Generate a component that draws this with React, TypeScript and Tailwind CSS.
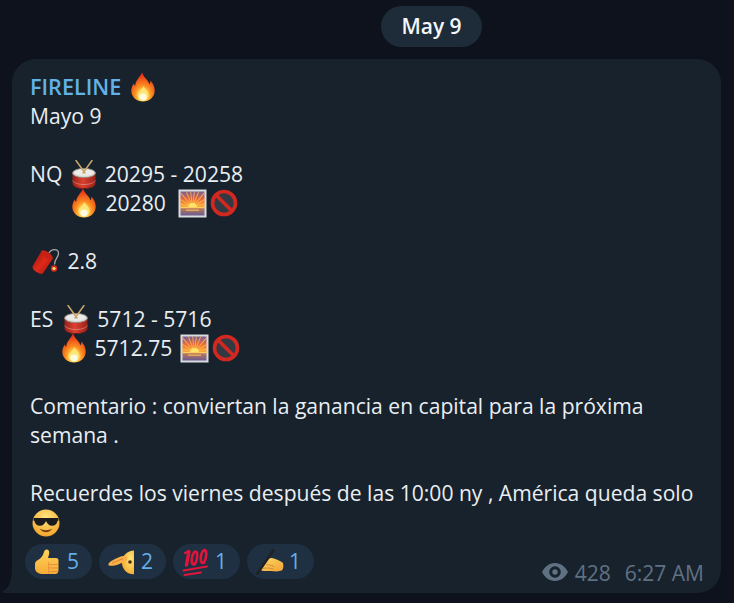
import React from "react";

const base = "inline-block -mt-[8px] -mb-[4px] ";

function Fire({ id, className = "" }: { id: string; className?: string }) {
  return (
    <svg viewBox="0 0 24 30" width="24" height="30" className={base + className}>
      <defs>
        <radialGradient id={id} cx="50%" cy="80%" r="75%">
          <stop offset="0%" stopColor="#fffbe0" />
          <stop offset="20%" stopColor="#ffe15a" />
          <stop offset="48%" stopColor="#fb8c1f" />
          <stop offset="100%" stopColor="#e42a18" />
        </radialGradient>
      </defs>
      <path
        d="M11 .5c1.500 3.500 2.800 5 5 7.500 1.200 1.400 2 2.800 2.300 4.300 1-.7 1.200-2.300 1-3.800 2.700 2.700 4.400 6 4.400 10C23.700 25 18.500 29.500 12 29.500S.3 25 .3 18.800c0-3 1.200-5.500 2.600-7.300.2 1 .6 2 1.400 2.500C4 9 8.500 6 11 .5z"
        fill={`url(#${id})`}
      />
      <path d="M12.500 14c.6 2.500 5 4.500 5 9 0 3.300-2.500 5.500-5.500 5.500S6.500 26.300 6.500 23c0-3.500 4.500-5 6-9z" fill="#ffe67a" opacity=".9" />
      <ellipse cx="12" cy="25" rx="3.600" ry="3.400" fill="#fffbe0" />
    </svg>
  );
}

function Drum({ id, className = "" }: { id: string; className?: string }) {
  return (
    <svg viewBox="0 0 24 29" width="24" height="29" className={base + className}>
      <defs>
        <linearGradient id={id} x1="0" y1="0" x2="1" y2="0">
          <stop offset="0%" stopColor="#98201a" />
          <stop offset="45%" stopColor="#dc4030" />
          <stop offset="100%" stopColor="#98201a" />
        </linearGradient>
      </defs>
      <path d="M.5 13v10.500c0 3 5 5.500 11.500 5.500s11.500-2.500 11.500-5.500V13z" fill={`url(#${id})`} />
      <path d="M.5 23c0 3 5 5 11.500 5s11.500-2 11.500-5v.8c0 3-5 5.200-11.500 5.200S.5 26.800.5 23.800z" fill="#5e1a14" />
      <path d="M.6 20.500c1.500 2.500 6 4 11.400 4s10-1.500 11.400-4" fill="none" stroke="#e8b9a4" strokeWidth=".5" />
      <ellipse cx="12" cy="13" rx="11.500" ry="4.600" fill="#d9d9d6" stroke="#8e8778" strokeWidth=".8" />
      <ellipse cx="12" cy="12.500" rx="9.500" ry="3.300" fill="#ececea" />
      <path d="M4 .5l9 12.500M20 .5l-9 12.500" stroke="#c9a566" strokeWidth="1.500" strokeLinecap="round" />
    </svg>
  );
}

function Sunrise({ id, className = "" }: { id: string; className?: string }) {
  const rays = [-75, -58, -40, -22, -7, 7, 22, 40, 58, 75];
  return (
    <svg viewBox="0 0 29 29" width="29" height="29" className={base + className}>
      <defs>
        <linearGradient id={id} x1="0" y1="0" x2="0" y2="1">
          <stop offset="0%" stopColor="#75609f" />
          <stop offset="32%" stopColor="#e8683c" />
          <stop offset="62%" stopColor="#fcaa3a" />
          <stop offset="66%" stopColor="#c87e55" />
          <stop offset="100%" stopColor="#6a5a90" />
        </linearGradient>
      </defs>
      <rect x=".5" y=".5" width="28" height="28" fill="#d8dde0" />
      <rect x="2.500" y="2.500" width="24" height="24" fill={`url(#${id})`} />
      <clipPath id={id + "c"}>
        <rect x="2.500" y="2.500" width="24" height="16" />
      </clipPath>
      <g clipPath={`url(#${id}c)`}>
        {rays.map((r) => (
          <path key={r} d="M14.500 18L14.500 -6" stroke="#ffc04d" strokeWidth="1" opacity=".75" transform={`rotate(${r} 14.500 18)`} />
        ))}
      </g>
      <path d="M10 18.500a4.500 4.500 0 0 1 9 0z" fill="#ffe36a" />
      <rect x="2.500" y="18" width="24" height="1.200" fill="#ffd060" />
      <rect x="8" y="20.500" width="13" height="1.500" fill="#ffc35a" opacity=".7" />
    </svg>
  );
}

function NoEntry({ className = "" }: { className?: string }) {
  return (
    <svg viewBox="0 0 28 28" width="28" height="28" className={"inline-block -mt-[8px] -mb-[3px] " + className}>
      <circle cx="14" cy="14" r="11.500" fill="#f4e9e6" fillOpacity=".12" stroke="#d2281f" strokeWidth="3.600" />
      <path d="M6 6l16 16" stroke="#d2281f" strokeWidth="3.600" />
    </svg>
  );
}

function Firecracker({ id, className = "" }: { id: string; className?: string }) {
  return (
    <svg viewBox="0 -3 28 28" width="28" height="28" className={base + className}>
      <defs>
        <linearGradient id={id} x1="0" y1="0" x2="1" y2="1">
          <stop offset="0%" stopColor="#8d1109" />
          <stop offset="50%" stopColor="#df2a1a" />
          <stop offset="100%" stopColor="#a6140b" />
        </linearGradient>
      </defs>
      <path d="M17 3C19.500 -1.500 26.500 -1.500 26.500 3.500c0 4-4 5-4 11" fill="none" stroke="#a8a8a8" strokeWidth="1.300" />
      <path d="M9.500 1L20.500 9 10.800 23.500c-1 1-3.400.4-6.400-1.500S.2 17.800.5 16.500z" fill={`url(#${id})`} />
      <ellipse cx="15" cy="5" rx="6.900" ry="3" transform="rotate(36 15 5)" fill="#c92015" />
      <circle cx="22" cy="18.500" r="3.200" fill="#d92a1c" />
      <circle cx="22" cy="18.500" r="1.600" fill="#ffe37a" />
    </svg>
  );
}

function Cool({ id, className = "" }: { id: string; className?: string }) {
  return (
    <svg viewBox="0 0 28 28" width="28" height="28" className={"inline-block -mt-[7px] -mb-[5px] " + className}>
      <defs>
        <radialGradient id={id} cx="50%" cy="30%" r="75%">
          <stop offset="0%" stopColor="#ffe680" />
          <stop offset="100%" stopColor="#f2a024" />
        </radialGradient>
      </defs>
      <circle cx="14" cy="14" r="13.500" fill={`url(#${id})`} />
      <path d="M1.500 9h25v2.500l-1 .5c-.5 3-2.500 4.800-5.500 4.800S15 14.500 14 12c-1 2.500-3 4.800-6 4.800S3 15 2.500 12l-1-.5z" fill="#1b1b1f" />
      <path d="M7.500 19.500c2 2.800 4.300 3.800 6.500 3.800s4.500-1 6.500-3.800c-2 1.200-4.300 1.700-6.500 1.700s-4.500-.5-6.500-1.700z" fill="#7a3d10" />
    </svg>
  );
}

function Thumb({ id }: { id: string }) {
  return (
    <svg viewBox="0 0 25 26" width="25" height="26" className="block">
      <defs>
        <linearGradient id={id} x1="0" y1="0" x2="0" y2="1">
          <stop offset="0%" stopColor="#ffd45a" />
          <stop offset="100%" stopColor="#f6ab36" />
        </linearGradient>
      </defs>
      <path d="M1 15c0-1.500 1-3 3-4 2.500-1.500 5-4 6-8 .4-1.600 1.600-2.700 3-2.500 1.800.3 2.400 2 2.200 4-.2 1.700-.8 3-1.200 4.500h8c1.600 0 2.500 1.100 2.500 2.500v9.500c0 2.500-1 4-3.200 4H9c-4 0-8-2-8-6z" fill={`url(#${id})`} />
      <path d="M14.500 13v12" stroke="#e4913a" strokeWidth=".8" />
      <path d="M15 15.500h9M15 19h9M15 22.500h9" stroke="#e4913a" strokeWidth="1" />
    </svg>
  );
}

function Salute({ id }: { id: string }) {
  return (
    <svg viewBox="0 0 27 26" width="27" height="26" className="block">
      <defs>
        <radialGradient id={id} cx="70%" cy="35%" r="75%">
          <stop offset="0%" stopColor="#ffe47a" />
          <stop offset="100%" stopColor="#f5a92a" />
        </radialGradient>
      </defs>
      <path d="M26 1.500a12 12 0 0 0-12 12 11.500 11.500 0 0 0 12 11.800z" fill={`url(#${id})`} />
      <circle cx="22" cy="13" r="1.800" fill="#4a2c10" />
      <g transform="translate(0 2.500)">
        <path d="M.5 12.500c.5-2 5-4.500 10-6.500 3-1.200 6.500-2.500 8-1 1.400 1.300.8 3.500-.7 4.500-2.200 1.500-4.800 2.500-7 3.200-3.500 1.200-7 2-9 1.500C.7 14 .2 13.500.5 12.500z" fill="#f9b048" />
        <path d="M4 12c3-1.800 7-3.500 11-4.700" stroke="#d97f28" strokeWidth=".9" fill="none" />
      </g>
    </svg>
  );
}

function Hundred() {
  return (
    <svg viewBox="0 0 27 28" width="27" height="28" className="block">
      <g fill="none" stroke="#e0153c" strokeLinecap="round">
        <path d="M7 3.500L4.500 17" strokeWidth="3.400" />
        <path d="M3 5l3.500-1.800" strokeWidth="2.200" />
        <ellipse cx="12.500" cy="10" rx="2.500" ry="6.500" transform="rotate(10 12.500 10)" strokeWidth="2.600" />
        <ellipse cx="21.500" cy="8.500" rx="2.500" ry="6.500" transform="rotate(10 21.500 8.500)" strokeWidth="2.600" />
        <path d="M1.500 22.500L25 18.500" strokeWidth="2.200" />
        <path d="M2.500 27L19 24.500" strokeWidth="1.900" />
      </g>
    </svg>
  );
}

function Writing({ id }: { id: string }) {
  return (
    <svg viewBox="0 0 28 26" width="28" height="26" className="block">
      <defs>
        <linearGradient id={id} x1="0" y1="0" x2="1" y2="1">
          <stop offset="0%" stopColor="#ffd860" />
          <stop offset="100%" stopColor="#f2a23a" />
        </linearGradient>
      </defs>
      <path d="M6 16c2-2.500 4.500-5 7.500-6.500 2-.8 3.500-.3 5 .3 3 1 6 2.500 8 3.700 1.200 1 1.200 6-.2 7.500-2 1.500-5.500 1.500-9 1.300-3-.2-5-.2-7.500-.2-2.500 0-5-.3-5.300-1.600C4.200 18.800 5 17.200 6 16z" fill={`url(#${id})`} />
      <path d="M7 19.500c3.500-1 6.500-.5 10.500.5M10.500 15.500c3 .5 5.500 1 8 2" stroke="#d98a33" strokeWidth="1" fill="none" />
      <path d="M17.500 1L1 25" stroke="#1f2226" strokeWidth="2.800" strokeLinecap="round" />
    </svg>
  );
}

function Eye() {
  return (
    <svg viewBox="0 0 26 18" width="26" height="18" className="-mt-[3px] block">
      <path
        fillRule="evenodd"
        fill="#5f7183"
        d="M13 0C7 0 2.500 4 0 9c2.500 5 7 9 13 9s10.500-4 13-9c-2.500-5-7-9-13-9zm0 3.200a5.800 5.800 0 1 1 0 11.600 5.800 5.800 0 0 1 0-11.600zm0 3.100a2.700 2.700 0 1 0 0 5.400 2.700 2.700 0 0 0 0-5.400z"
      />
    </svg>
  );
}

function Reaction({ icon, n }: { icon: React.ReactNode; n: string }) {
  return (
    <div className="flex h-[35px] w-[67px] items-center rounded-full bg-[#1e3041] pl-[9px]">
      <div className="flex w-[33px] shrink-0 items-center">{icon}</div>
      <span className="text-[21px] leading-none text-[#64aee8]">{n}</span>
    </div>
  );
}

function Line({ children, className = "" }: { children?: React.ReactNode; className?: string }) {
  return <div className={"h-[29px] whitespace-pre leading-[29px] " + className}>{children}</div>;
}

export default function App() {
  return (
    <div className="flex h-[603px] w-[734px] flex-col overflow-hidden bg-[#0d121c] font-['Open_Sans',sans-serif] text-[#e9eef2]">
      <div className="ml-[381px] mt-[6px] flex h-[41px] w-[101px] items-center justify-center rounded-full bg-[#1e2c3a] text-[21px] font-semibold text-[#f2f6f8]">
        May 9
      </div>
      <div className="relative ml-[12px] mt-[12px] h-[534px] w-[709px] rounded-[24px] rounded-bl-none bg-[#18222d] pt-[13px]">
        <svg viewBox="0 0 12 22" width="12" height="22" className="absolute -left-[10px] bottom-0 text-[#18222d]">
          <path d="M10 0h2v22H3c-2 0-3.200-1-2-2 5-2.500 8-8 9-20z" fill="currentColor" />
        </svg>
        <div className="pl-[18px] text-[21.1px]">
          <Line className="text-[21.6px] font-semibold text-[#62b2e8]">
            FIRELINE <Fire id="f1" className="ml-[4px]" />
          </Line>
          <Line>Mayo 9</Line>
          <Line />
          <Line>
            NQ  <Drum id="d1" className="-ml-[1px] mr-[3px]" /> 20295 - 20258
          </Line>
          <Line>
            <span className="inline-block w-[42px]" />
            <Fire id="f2" className="mr-[4px]" /> 20280  <Sunrise id="s1" className="ml-[1px]" />
            <NoEntry className="ml-[3px]" />
          </Line>
          <Line />
          <Line>
            <Firecracker id="k1" className="ml-[2px] mr-[2px]" /> 2.8
          </Line>
          <Line />
          <Line>
            ES <Drum id="d2" className="ml-[5px] mr-[4px]" /> 5712 - 5716
          </Line>
          <Line>
            <span className="inline-block w-[32px]" />
            <Fire id="f3" className="mr-[3px]" /> 5712.75 <Sunrise id="s2" className="ml-[2px]" />
            <NoEntry className="ml-[3px]" />
          </Line>
          <Line />
          <Line>Comentario : conviertan la ganancia en capital para la próxima</Line>
          <Line>semana .</Line>
          <Line />
          <Line>Recuerdes los viernes después de las 10:00 ny , América queda solo</Line>
          <Line>
            <Cool id="c1" className="ml-[2px]" />
          </Line>
        </div>
        <div className="mt-[8px] flex items-end justify-between pl-[13px] pr-[17px]">
          <div className="flex gap-[7px]">
            <Reaction icon={<Thumb id="t1" />} n="5" />
            <Reaction icon={<Salute id="u1" />} n="2" />
            <Reaction icon={<Hundred />} n="1" />
            <Reaction icon={<Writing id="w1" />} n="1" />
          </div>
          <div className="-mb-[8px] flex items-center text-[21px] leading-[27px] text-[#5f7183]">
            <Eye />
            <span className="ml-[7px]">428</span>
            <span className="ml-[14px]">6:27 AM</span>
          </div>
        </div>
      </div>
    </div>
  );
}
